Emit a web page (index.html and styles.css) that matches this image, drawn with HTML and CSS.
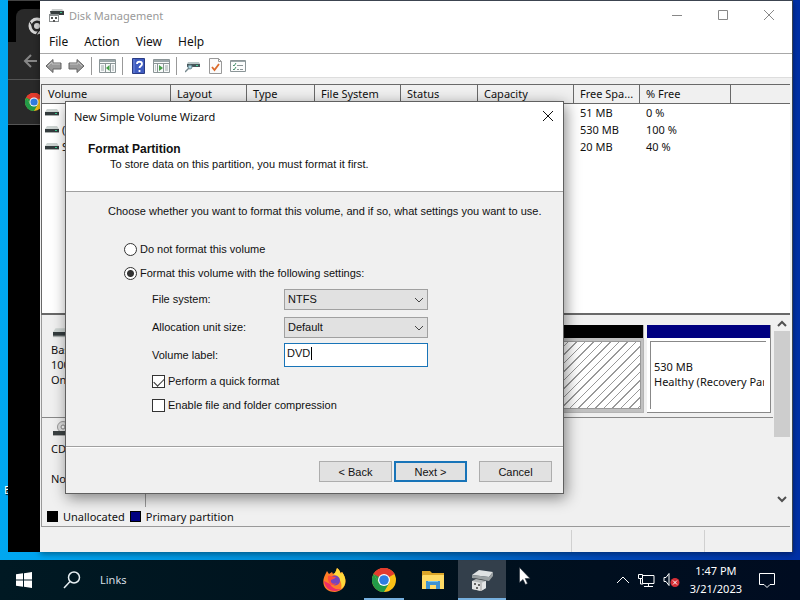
FILE: index.html
```html
<!DOCTYPE html>
<html lang="en">
<head>
<meta charset="utf-8">
<title>Disk Management</title>
<link rel="stylesheet" href="styles.css">
</head>
<body>
<svg class="defs" aria-hidden="true">
  <defs>
    <symbol id="drive" viewBox="0 0 14 10">
      <path d="M2 2h10l2 3H0z" fill="#ccd3d1"/>
      <path d="M0 5h14v3H0z" fill="#333b3d"/>
      <path d="M0 8h14v1H0z" fill="#a9aead"/>
      <path d="M10 6h2v1h-2z" fill="#35c98d"/>
    </symbol>
    <symbol id="chrome" viewBox="0 0 24 24">
      <circle cx="12" cy="12" r="12" fill="#fbc116"/>
      <path d="M12 12 1.600 6A12 12 0 0 1 22.400 6z" fill="#e33b2e"/>
      <path d="M1.600 6A12 12 0 0 0 12 24l5.200-9L12 12 6.800 15z" fill="#229a48"/>
      <path d="M1.600 6 6.800 15 12 12V6z" fill="#229a48"/>
      <path d="M1.600 6A12 12 0 0 1 22.400 6H12L7 9z" fill="#e33b2e"/>
      <circle cx="12" cy="12" r="6" fill="#fff"/>
      <circle cx="12" cy="12" r="4.800" fill="#2f7de1"/>
    </symbol>
  </defs>
</svg>

<main class="desktop">
  <span class="desktop-label">E</span>

  <section class="browser" aria-label="Browser">
    <div class="tab-strip"><div class="tab">
      <svg width="18" height="18" viewBox="0 0 18 18"><circle cx="9" cy="9" r="7" fill="none" stroke="#d5d5d5" stroke-width="3"/><circle cx="9" cy="9" r="3" fill="#d5d5d5"/><path d="M9 5h8M5.500 11 2 5M12.500 11 8 18" stroke="#292929" stroke-width="1.200"/></svg>
    </div></div>
    <div class="browser-nav">
      <svg width="14" height="14" viewBox="0 0 14 14" fill="none" stroke="#868686" stroke-width="2"><path d="M14 7H2M8 1 2 7l6 6"/></svg>
    </div>
    <div class="bookmarks"><svg width="18" height="18"><use href="#chrome"/></svg></div>
  </section>

  <section class="window" aria-label="Disk Management">
    <header class="titlebar">
      <svg width="16" height="16" viewBox="0 0 16 16"><path d="M4 1h10l2 2v3H2z" fill="#c9cccc"/><path d="M2 3h14v4H3z" fill="#373c3d"/><path d="M12 4h2v1h-2z" fill="#39c28a"/><path d="M1 6h10v8H1z" fill="#8b8f90"/><path d="M2 8h8v5H2z" fill="#fff"/><path d="M3 9h2v2H3zM7 9h2v2H7zM5 12h2v2H5z" fill="#555"/></svg>
      <h1>Disk Management</h1>
      <div class="win-controls">
        <button aria-label="Minimize"><svg width="12" height="12" viewBox="0 0 12 12"><path d="M1 5.500h10"/></svg></button>
        <button aria-label="Maximize"><svg width="12" height="12" viewBox="0 0 12 12"><path d="M1.500.5h9v9h-9z"/></svg></button>
        <button aria-label="Close"><svg width="12" height="12" viewBox="0 0 12 12"><path d="m1 0 10 10M11 0 1 10"/></svg></button>
      </div>
    </header>
    <nav class="menubar"><button>File</button><button>Action</button><button>View</button><button>Help</button></nav>
    <div class="toolbar">
      <button aria-label="Back"><svg width="17" height="16" viewBox="0 0 17 16"><path d="M1 8 8 1.500V5h8v6H8v3.500z" fill="#999" stroke="#626262"/><path d="M3 8l4-4v2h8" fill="none" stroke="#c4c4c4"/></svg></button>
      <button aria-label="Forward"><svg width="17" height="16" viewBox="0 0 17 16"><path d="M16 8 9 1.500V5H1v6h8v3.500z" fill="#999" stroke="#626262"/><path d="M2 6h8V4l4 4" fill="none" stroke="#c4c4c4"/></svg></button>
      <i class="tool-sep"></i>
      <button aria-label="Show console tree"><svg width="17" height="16" viewBox="0 0 17 16"><path d="M.5 1.500h16v13H.5z" fill="#f7f9f9" stroke="#8b9597"/><path d="M1 2h15v2H1z" fill="#9ba7a9"/><path d="M1 5.500h15M6.500 6v8M11.500 6v8" stroke="#8b9597"/><path d="M2 8h3M2 10h3M2 12h3M13 8h2M13 10h2M13 12h2" stroke="#9ba7a9"/><path d="M10.500 7v6L7 10z" fill="#43a047"/></svg></button>
      <i class="tool-sep"></i>
      <button aria-label="Help"><svg width="13" height="16" viewBox="0 0 13 16"><path d="M.5.5h12v15H.5z" fill="#3f5cc0" stroke="#2a3b83"/><path d="M2 1v14" stroke="#7189da"/><path d="M5 6c0-3 5-3 5 0 0 2-2.500 2-2.500 4M7.500 12v2" fill="none" stroke="#fff" stroke-width="1.800"/></svg></button>
      <button aria-label="Show action pane"><svg width="17" height="16" viewBox="0 0 17 16"><path d="M.5 1.500h16v13H.5z" fill="#f7f9f9" stroke="#8b9597"/><path d="M1 2h15v2H1z" fill="#9ba7a9"/><path d="M1 5.500h15M4.500 6v8M10.500 6v8" stroke="#8b9597"/><path d="M2 8h1M2 10h1M2 12h1M12 8h3M12 10h3M12 12h3" stroke="#9ba7a9"/><path d="M6 7v6l4-3z" fill="#43a047"/></svg></button>
      <i class="tool-sep"></i>
      <button aria-label="Refresh disks"><svg width="16" height="16" viewBox="0 0 16 16"><path d="M3 4h11l1 2H2z" fill="#b9c6c7"/><path d="M2 6h13v3H2z" fill="#46565a"/><path d="M11 7h2v1h-2z" fill="#48d59c"/><circle cx="5" cy="9" r="2" fill="#a8d5e0" stroke="#6e8c96"/><path d="m4 10-4 4" stroke="#75878d" stroke-width="1.500"/></svg></button>
      <button aria-label="Properties"><svg width="13" height="16" viewBox="0 0 13 16"><path d="M.5.5h9l3 3v12H.5z" fill="#fbfbfb" stroke="#999"/><path d="M9.500.5v3h3" fill="none" stroke="#999"/><path d="m3 9 2.500 3L10 6" fill="none" stroke="#dc6b2b" stroke-width="1.800"/></svg></button>
      <button aria-label="Options"><svg width="17" height="14" viewBox="0 0 17 14"><path d="M.5 1.500h15v11H.5z" fill="#fbfcfc" stroke="#8b9597"/><path d="M1 2.500h14" stroke="#9ba7a9"/><path d="m3 6 1 1 2-3M3 10l1 1 2-3" fill="none" stroke="#43906a"/><path d="M7 6.500h6M7 10.500h2M10 10.500h3" stroke="#8b9597"/></svg></button>
    </div>

    <div class="volume-list">
      <table>
        <colgroup><col class="c-volume"><col class="c-layout"><col class="c-type"><col class="c-fs"><col class="c-status"><col class="c-cap"><col class="c-free"><col class="c-pct"><col></colgroup>
        <thead><tr><th>Volume</th><th>Layout</th><th>Type</th><th>File System</th><th>Status</th><th>Capacity</th><th>Free Spa...</th><th>% Free</th><th></th></tr></thead>
        <tbody>
          <tr><td class="vol"><svg width="14" height="10"><use href="#drive"/></svg></td><td></td><td></td><td></td><td></td><td></td><td>51 MB</td><td>0 %</td><td></td></tr>
          <tr><td class="vol"><svg width="14" height="10"><use href="#drive"/></svg>(C:)</td><td></td><td></td><td></td><td></td><td></td><td>530 MB</td><td>100 %</td><td></td></tr>
          <tr><td class="vol"><svg width="14" height="10"><use href="#drive"/></svg>S</td><td></td><td></td><td></td><td></td><td></td><td>20 MB</td><td>40 %</td><td></td></tr>
        </tbody>
      </table>
    </div>

    <div class="graph">
      <div class="disks">
        <div class="disk">
          <div class="disk-info"><svg width="18" height="14"><use href="#drive"/></svg><span>Basic</span><span>100</span><span>Onl</span></div>
          <div class="parts">
            <div class="part part-free"><div class="hatch"></div></div>
            <div class="part part-primary"><div class="part-box"><span>530 MB</span><span>Healthy (Recovery Partition)</span></div></div>
          </div>
        </div>
        <div class="disk disk-cd">
          <div class="disk-info"><svg width="22" height="17" viewBox="0 0 22 17"><circle cx="10" cy="6" r="5.500" fill="#dedede" stroke="#999"/><circle cx="10" cy="6" r="2" fill="#fff" stroke="#888"/><path d="M0 10h22v4H0z" fill="#3b4142"/><path d="M0 14h22v1H0z" fill="#aaa"/></svg><span>CD-</span><span>&nbsp;</span><span>No</span></div>
          <div class="parts"></div>
        </div>
      </div>
      <div class="scrollbar" aria-hidden="true">
        <svg width="10" height="8" viewBox="0 0 10 8"><path d="m1 6 4-4 4 4"/></svg>
        <div class="track"><div class="thumb"></div></div>
        <svg width="10" height="8" viewBox="0 0 10 8"><path d="m1 2 4 4 4-4"/></svg>
      </div>
    </div>
    <div class="legend"><i class="swatch black"></i><span>Unallocated</span><i class="swatch navy"></i><span>Primary partition</span></div>
    <footer class="statusbar"><span></span><span></span><span></span></footer>
  </section>

  <form class="dialog" role="dialog" aria-labelledby="wizard-title">
    <div class="dialog-top">
      <div class="dialog-title"><span id="wizard-title">New Simple Volume Wizard</span>
        <button type="button" aria-label="Close"><svg width="12" height="12" viewBox="0 0 12 12"><path d="m1 0 10 10M11 0 1 10"/></svg></button></div>
      <div class="dialog-head"><h2>Format Partition</h2><p>To store data on this partition, you must format it first.</p></div>
    </div>
    <div class="dialog-body">
      <p>Choose whether you want to format this volume, and if so, what settings you want to use.</p>
      <div class="options">
        <label class="option"><input type="radio" name="format">Do not format this volume</label>
        <label class="option"><input type="radio" name="format" checked>Format this volume with the following settings:</label>
        <div class="settings">
          <div class="field"><label for="fs">File system:</label>
            <div class="select"><select id="fs"><option>NTFS</option></select><svg width="10" height="8" viewBox="0 0 10 8"><path d="m1 2 4 4 4-4"/></svg></div></div>
          <div class="field"><label for="unit">Allocation unit size:</label>
            <div class="select"><select id="unit"><option>Default</option></select><svg width="10" height="8" viewBox="0 0 10 8"><path d="m1 2 4 4 4-4"/></svg></div></div>
          <div class="field"><label for="label">Volume label:</label>
            <div class="textbox"><input id="label" type="text" value="DVD"><i class="caret"></i></div></div>
          <label class="option"><input type="checkbox" checked>Perform a quick format</label>
          <label class="option"><input type="checkbox">Enable file and folder compression</label>
        </div>
      </div>
    </div>
    <div class="dialog-actions"><button type="button">&lt; Back</button><button type="button" class="primary">Next &gt;</button><button type="button" class="cancel">Cancel</button></div>
  </form>
</main>

<footer class="taskbar">
  <button class="start" aria-label="Start"><svg width="16" height="16" viewBox="0 0 16 16" fill="#fff"><path d="M0 2.300 7 1.300v6.200H0zM8 1.200 16 0v7.500H8zM0 8.500h7v6.200L0 13.700zM8 8.500h8V16l-8-1.200z"/></svg></button>
  <button class="search" aria-label="Search"><svg width="18" height="18" viewBox="0 0 18 18" fill="none" stroke="#e6eef2" stroke-width="1.500"><circle cx="11" cy="6.500" r="5.500"/><path d="M7 10.500 1 17"/></svg></button>
  <span class="links">Links</span>
  <div class="apps">
    <button aria-label="Firefox"><svg width="24" height="24" viewBox="0 0 24 24"><path d="M2 7 4 3l2 3 3-2 1 2c2 0 3-3 4-6 2 2 3 3 3 5l2-1c7 9 3 19-7 20C1 24-2 15 2 7z" fill="#ff7c26"/><path d="M14 0c3 2 3 4 4 6l1-2c6 8 3 15-1 17 2-7-3-13-8-15 2 0 3-3 4-6z" fill="#ffd93b"/><path d="M1 13c1 8 9 13 17 8-5 1-9-1-11-5z" fill="#ee2d67"/><circle cx="12" cy="12.500" r="5" fill="#7544bd"/><path d="M5 8c3-1 4 1 8 1-1 2-4 2-5 3-1 3 3 5 6 3-3 4-10 2-9-7z" fill="#ff4b3e"/></svg></button>
    <button class="running" aria-label="Chrome"><svg width="24" height="24"><use href="#chrome"/></svg></button>
    <button aria-label="File Explorer"><svg width="22" height="20" viewBox="0 0 22 20"><path d="M0 1h8l2 2h12v16H0z" fill="#dba629"/><path d="M1 5h21v14H0V6z" fill="#ffdb66"/><path d="M4 11h14v8h-4v-4H8v4H4z" fill="#3c93d2"/><path d="M6 11h10v1H6z" fill="#74c4ee"/></svg></button>
    <button class="active" aria-label="Disk Management"><svg width="24" height="24" viewBox="0 0 24 24"><path d="M2 7 9 2l14 2-4 5z" fill="#dfe2e3"/><path d="m2 7 17 2 4-5v4l-4 5L2 10z" fill="#9aa0a2"/><path d="m4 10 11 2v2h-9z" fill="#43494b"/><path d="m2 13 4-2 10 2v7l-5 3-9-2z" fill="#b2b6b8"/><path d="m2 13 9 2 5-2v7l-5 3-9-2z" fill="#e2e4e5"/><path d="M4 15h2v2H4zM8 16h2v2H8zM6 19h2v2H6z" fill="#666"/><path d="M11 15v8" stroke="#999"/></svg></button>
  </div>
  <div class="tray">
    <svg width="14" height="8" viewBox="0 0 14 8"><path d="m1 7 6-6 6 6"/></svg>
    <svg width="17" height="15" viewBox="0 0 17 15"><path d="M5 2.500h11v8H4.500V6M10.500 11v3M6 13.500h9M.5 1.500h4v4h-4zM2.500 6v5H5"/></svg>
    <svg width="17" height="16" viewBox="0 0 17 16"><path d="M1 5.500h2l3-4v12l-3-4H1z"/><circle class="bad" cx="12" cy="10.500" r="4.500"/><path d="m10 8.500 4 4m0-4-4 4"/></svg>
    <div class="clock"><span>1:47 PM</span><span>3/21/2023</span></div>
    <svg class="t-note" width="18" height="17" viewBox="0 0 18 17"><path d="M1.500 1.500h15v11H12l-3 3-3-3H1.500z"/></svg>
  </div>
</footer>
<svg class="pointer" width="12" height="18" viewBox="0 0 12 18"><path d="M.5.5v15l3.500-3 2.500 5 2-1-2.300-5H11z" fill="#fff" stroke="#26303a" stroke-width=".6"/></svg>
</body>
</html>
```
FILE: styles.css
```css
* { box-sizing: border-box; }

body {
  margin: 0;
  height: 100vh;
  display: flex;
  flex-direction: column;
  overflow: hidden;
  font: 11px/16px "Noto Sans", "Open Sans", sans-serif;
  color: #111;
  background: linear-gradient(90deg, #00a7f1, #0089d5 45%, #0049ba 75%, #0030a6);
}

h1, h2, p { margin: 0; font-size: inherit; font-weight: normal; }
button, input, select { font: inherit; color: inherit; margin: 0; }
button { padding: 0; border: 0; background: none; }
svg { display: block; flex: none; }
.defs { position: absolute; width: 0; height: 0; }

.desktop { position: relative; flex: 1; min-height: 0; }
.desktop-label { position: absolute; left: 4px; top: 482px; color: #fff; text-shadow: 1px 1px 1px #000; }

/* Browser window behind */
.browser { position: absolute; left: 8px; top: 0; bottom: 8px; width: 60px; background: #000; border-top: 1px solid #444; }
.tab-strip { height: 43px; padding: 8px 0 0 8px; background: linear-gradient(#000 41px, #292929 41px); }
.tab { height: 35px; padding: 8px 0 0 12px; background: #292929; border-radius: 8px 0 0 0; }
.browser-nav { height: 36px; padding: 10px 0 0 15px; background: #292929; border-bottom: 1px solid #555; }
.bookmarks { height: 45px; padding: 13px 0 0 17px; background: #292929; border-bottom: 1px solid #555; }

/* Main window */
.window {
  position: absolute;
  left: 40px;
  right: 7px;
  top: 0;
  bottom: 8px;
  display: flex;
  flex-direction: column;
  background: #f0f0f0;
  border: solid #3c4450;
  border-width: 1px 1px 0 0;
  box-shadow: 0 2px 6px #0006;
}
.titlebar { display: flex; align-items: center; height: 30px; padding-left: 8px; background: #fff; color: #999; }
.titlebar h1 { flex: 1; padding-left: 5px; }
.win-controls { display: flex; }
.win-controls button { width: 46px; height: 28px; display: grid; place-items: center; }
.win-controls svg { fill: none; stroke: #888; }
.menubar { display: flex; align-items: center; gap: 16px; height: 23px; padding-left: 9px; background: #fff; border-bottom: 1px solid #a8a8a8; font-size: 12px; }
.toolbar { display: flex; align-items: center; gap: 6px; height: 24px; padding-left: 5px; background: #fff; border-bottom: 1px solid #ddd; }
.toolbar button { width: 17px; display: grid; place-items: center; }
.tool-sep { width: 1px; height: 18px; margin-right: 1px; background: #999; }

.volume-list { height: 231px; margin: 6px 2px 0 1px; background: #fff; border: 1px solid #696969; border-width: 1px 0 2px 1px; }
table { width: 100%; table-layout: fixed; border-collapse: separate; border-spacing: 0; }
.c-volume { width: 129px; }
.c-layout { width: 76px; }
.c-type { width: 68px; }
.c-fs { width: 86px; }
.c-status { width: 77px; }
.c-cap { width: 96px; }
.c-free { width: 66px; }
.c-pct { width: 91px; }
th { height: 19px; padding: 0 6px; text-align: left; font-weight: normal; background: #f0f0f0; border: solid #696969; border-width: 0 1px 1px 0; white-space: nowrap; }
th:last-child { border-right: 0; }
td { height: 17px; padding: 0 6px; line-height: 17px; white-space: nowrap; }
td.vol { padding-left: 3px; }
.vol svg { display: inline-block; margin-right: 3px; }

.graph { flex: 1; min-height: 0; display: flex; margin: 0 2px 0 1px; border-left: 1px solid #999; }
.disks { flex: 1; min-width: 0; overflow: hidden; display: flex; flex-direction: column; padding-right: 1px; }
.disk { display: grid; grid-template-columns: 104px 1fr; height: 103px; border-bottom: 1px solid #888; }
.disk-cd { flex: 1; height: auto; border-bottom: 0; }
.disk-info { display: flex; flex-direction: column; line-height: 15px; padding: 10px 0 0 9px; border-right: 1px solid #999; }
.disk-info svg { margin: 0 0 3px 2px; }
.disk-cd .disk-info { padding-top: 3px; }
.parts { display: flex; gap: 3px; min-width: 0; padding: 10px 2px 4px 4px; }
.part { border: solid #b4b4b4; border-width: 0 1px 1px 0; display: flex; flex-direction: column; }
.part::before { content: ""; height: 13px; background: #000; }
.part-free { flex: 1; background: #c0c0c0; }
.hatch { flex: 1; margin: 3px 2px; border: 1px solid #999; background: repeating-linear-gradient(135deg, #fff 0 5px, #999 5px 6px); }
.part-primary { width: 124px; background: #fff; border-color: #888; }
.part-primary::before { background: #000080; }
.part-box { flex: 1; margin: 3px 4px 3px 3px; padding: 17px 2px 0 3px; border: solid #888; border-width: 1px 0 0 1px; line-height: 15px; }
.part-box span { display: block; white-space: nowrap; overflow: hidden; }

.scrollbar { width: 16px; display: flex; flex-direction: column; align-items: center; justify-content: space-between; padding: 5px 0 4px; }
.scrollbar svg { fill: none; stroke: #505050; stroke-width: 2; }
.track { flex: 1; align-self: stretch; padding: 3px 0 4px; }
.thumb { height: 66%; background: #cdcdcd; }

.legend { display: flex; align-items: center; gap: 5px; height: 20px; margin: 0 2px 0 1px; padding-left: 5px; border: solid #999; border-width: 0 0 1px 1px; }
.swatch { width: 11px; height: 11px; border: 1px solid #000; }
.black { background: #000; }
.navy { background: #000080; }
.statusbar { display: flex; height: 25px; padding-top: 3px; }
.statusbar span { border-left: 1px solid #d0d0d0; width: 133px; }
.statusbar span:first-child { flex: 1; border: 0; }
.statusbar span:last-child { width: 88px; }

/* Wizard */
.dialog {
  position: absolute;
  left: 65px;
  top: 101px;
  width: 499px;
  display: flex;
  flex-direction: column;
  background: #f0f0f0;
  border: 1px solid #606060;
  box-shadow: 2px 4px 14px #0007;
  font: 11px/14px "Liberation Sans", Arial, sans-serif;
}
.dialog-top { height: 90px; background: #fff; border-bottom: 1px solid #a0a0a0; }
.dialog-title { display: flex; justify-content: space-between; align-items: center; height: 30px; padding: 0 9px 0 8px; font: 11px/16px "Noto Sans", "Open Sans", sans-serif; }
.dialog-title svg { fill: none; stroke: #111; }
.dialog-head { padding: 10px 22px; }
.dialog-head h2 { font-weight: bold; font-size: 12px; }
.dialog-head p { padding: 1px 22px 0; }
.dialog-body { padding: 12px 0 29px 42px; }
.options { padding: 19px 16px 0; }
.option { display: flex; align-items: center; height: 24px; gap: 3px; }
.option input { appearance: none; width: 13px; height: 13px; border: 1px solid #333; background: #fff; }
.option input[type="radio"] { border-radius: 50%; }
.option input[type="radio"]:checked { background: radial-gradient(circle, #333 3px, #fff 4px); }
.option input[type="checkbox"]:checked::after { content: ""; display: block; width: 9px; height: 5px; margin: 2px 1px; border: solid #333; border-width: 0 0 1px 1px; transform: rotate(-45deg); }
.settings { padding-left: 28px; }
.field { display: grid; grid-template-columns: 132px 144px; align-items: center; height: 28px; }
.select, .textbox { position: relative; }
.select select { appearance: none; display: block; width: 100%; height: 21px; padding: 0 3px; border: 1px solid #a0a0a0; border-radius: 0; background: #e1e1e1; }
.select svg { position: absolute; right: 4px; top: 7px; fill: none; stroke: #444; pointer-events: none; }
.textbox input { display: block; width: 100%; height: 24px; padding: 0 2px 4px; border: 1px solid #1874b8; border-radius: 0; background: #fff; outline: 0; }
.caret { position: absolute; left: 27px; top: 4px; width: 1px; height: 13px; background: #000; }
.dialog-actions { display: flex; justify-content: flex-end; gap: 2px; padding: 14px 11px 11px; border-top: 1px solid #a0a0a0; box-shadow: inset 0 1px #fff; }
.dialog-actions button { width: 73px; height: 21px; border: 1px solid #adadad; background: #e1e1e1; }
.dialog-actions .primary { border: 2px solid #1874b8; }
.dialog-actions .cancel { margin-left: 10px; }

/* Taskbar */
.taskbar { display: flex; align-items: center; height: 40px; background: linear-gradient(90deg, #001923, #00121d 50%, #000c21); color: #fff; }
.start { padding: 0 16px; }
.search { padding: 0 15px; }
.links { flex: 1; padding-left: 4px; color: #d5dfe4; }
.apps { display: flex; gap: 1px; align-self: stretch; }
.apps button { width: 48px; display: grid; place-items: center; }
.apps .running { background: linear-gradient(#76b0df, #76b0df) bottom / 40px 2px no-repeat; }
.apps .active { background: linear-gradient(#333f4b 38px, #76b0df 38px); }
.tray { display: flex; align-items: center; gap: 8px; margin-left: 110px; padding-right: 24px; }
.tray svg { fill: none; stroke: #fff; }
.tray .bad { fill: #d62f36; stroke: none; }
.clock { display: flex; flex-direction: column; align-items: center; margin-left: 2px; line-height: 18px; }
.t-note { margin-left: 8px; }
.pointer { position: absolute; left: 519px; top: 567px; }
```
